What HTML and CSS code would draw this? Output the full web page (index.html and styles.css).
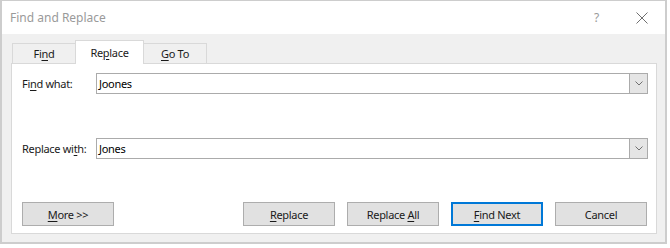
FILE: index.html
```html
<!DOCTYPE html>
<html lang="en">
<head>
  <meta charset="UTF-8" />
  <title>Find and Replace</title>
  <link rel="stylesheet" href="styles.css">
</head>
<body>
  <div class="window">
    <div class="titlebar">
      <span class="title">Find and Replace</span>
      <span class="help">?</span>
      <svg class="close" width="12" height="12" viewBox="0 0 12 12">
        <path d="M0.5 0.5 L11.5 11.5 M11.5 0.5 L0.5 11.5" stroke="#6f6f6f" stroke-width="1" fill="none"/>
      </svg>
    </div>

    <div class="content">
      <div class="tabs">
        <div class="tab">Fi<u>n</u>d</div>
        <div class="tab active">Re<u>p</u>lace</div>
        <div class="tab"><u>G</u>o To</div>
      </div>

      <div class="panel">
        <div class="field">
          <label>Fi<u>n</u>d what:</label>
          <div class="combo">
            <span class="value">Joones</span>
            <span class="drop">
              <svg width="8" height="5" viewBox="0 0 8 5"><path d="M0.5 0.5 L4 4 L7.5 0.5" stroke="#707070" fill="none"/></svg>
            </span>
          </div>
        </div>

        <div class="field second">
          <label>Replace wi<u>t</u>h:</label>
          <div class="combo">
            <span class="value">Jones</span>
            <span class="drop">
              <svg width="8" height="5" viewBox="0 0 8 5"><path d="M0.5 0.5 L4 4 L7.5 0.5" stroke="#707070" fill="none"/></svg>
            </span>
          </div>
        </div>

        <div class="buttons">
          <button class="btn"><u>M</u>ore &gt;&gt;</button>
          <div class="spacer"></div>
          <button class="btn"><u>R</u>eplace</button>
          <button class="btn">Replace <u>A</u>ll</button>
          <button class="btn default"><u>F</u>ind Next</button>
          <button class="btn">Cancel</button>
        </div>
      </div>
    </div>
  </div>
</body>
</html>
```

FILE: styles.css
```css
body {
  margin: 0;
  background: #ffffff;
  font-family: 'Noto Sans', sans-serif;
  font-size: 11px;
  letter-spacing: -0.3px;
  color: #1a1a1a;
}

u {
  text-decoration-thickness: 1px;
  text-underline-offset: 2px;
}

.window {
  width: 663px;
  height: 241px;
  border: 2px solid #cdcdcd;
  border-top: 1px solid #cdcdcd;
  background: #f0f0f0;
  display: flex;
  flex-direction: column;
}

/* Title bar */
.titlebar {
  height: 33px;
  background: #ffffff;
  display: flex;
  align-items: center;
  padding: 0 17px 0 8px;
}

.title {
  flex: 1;
  font-size: 12px;
  letter-spacing: 0;
  color: #9a9a9a;
}

.help {
  color: #9a9a9a;
  font-size: 12px;
  margin-right: 37px;
}

/* Body */
.content {
  flex: 1;
  padding: 7px 8px 8px 9px;
  display: flex;
  flex-direction: column;
}

.tabs {
  display: flex;
  align-items: flex-end;
  height: 22px;
  padding-left: 1px;
}

.tab {
  height: 19px;
  border: 1px solid #d9d9d9;
  border-bottom: none;
  background: #f0f0f0;
  display: flex;
  align-items: center;
  justify-content: center;
  width: 62px;
  margin-right: -1px;
}

.tab.active {
  position: relative;
  z-index: 1;
  width: 67px;
  height: 22px;
  margin-bottom: -1px;
  background: #ffffff;
  padding-bottom: 1px;
}

.panel {
  flex: 1;
  background: #ffffff;
  border: 1px solid #d9d9d9;
  padding: 9px 8px 7px 10px;
  display: flex;
  flex-direction: column;
}

.field {
  display: flex;
  align-items: center;
  height: 21px;
}

.field.second {
  margin-top: 44px;
}

.field label {
  width: 74px;
}

.combo {
  flex: 1;
  height: 21px;
  box-sizing: border-box;
  border: 1px solid #ababab;
  display: flex;
  align-items: stretch;
}

.combo .value {
  flex: 1;
  padding-left: 2px;
  display: flex;
  align-items: center;
  color: #000;
}

.combo .drop {
  width: 17px;
  background: #e5e5e5;
  border-left: 1px solid #ababab;
  display: flex;
  align-items: center;
  justify-content: center;
}

/* Buttons */
.buttons {
  margin-top: 43px;
  margin-right: 1px;
  display: flex;
  gap: 12px;
}

.spacer {
  flex: 1;
}

.btn {
  width: 92px;
  height: 24px;
  box-sizing: border-box;
  background: #e1e1e1;
  border: 1px solid #adadad;
  font-family: 'Noto Sans', sans-serif;
  font-size: 11px;
  letter-spacing: -0.3px;
  color: #1a1a1a;
  padding: 0;
}

.btn.default {
  border: 2px solid #0078d7;
}
```
